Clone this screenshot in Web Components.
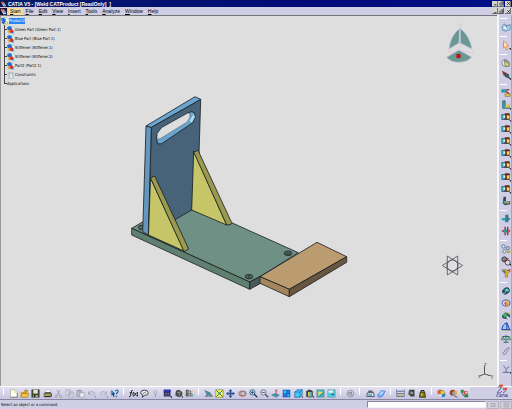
<!DOCTYPE html>
<html lang="en">
<head>
<meta charset="utf-8">
<title>CATIA V5</title>
<style>
    html, body { margin: 0; height: 100%; }
    body { font: 4px/6px "DejaVu Sans Condensed", "Liberation Sans", sans-serif; color: #000; background: #d0cee5; }
</style>
</head>
<body>
<cad-window></cad-window>

<script>
// all icons are drawn on a 12 x 12 grid
const ICONS = {
    app: '<path d="M0 0h12v12H0z" fill="#10153c"/><path d="M1 2l6 1 4 7-5 1z" fill="#e9edf5"/><path d="M1 1l7 1-3 5z" fill="#e2502c"/><path d="M5 5l6 1-4 4z" fill="#4c86c9"/>',
    product: '<path d="M4 1h5l3 3v8H4z" fill="#f4fbf5" stroke="#7fa9a0" stroke-width=".7"/><path d="M0 2l4-1 4 3-2 3-5-1z" fill="#2474dc"/><circle cx="4" cy="8" r="2.6" fill="#2c5ec5"/><circle cx="8" cy="9" r="2.7" fill="#d8b544"/><circle cx="8" cy="9" r="1" fill="#fff"/>',
    part: '<path d="M3 1h6l3 3v8H3z" fill="#edf8f3" stroke="#6d9e92" stroke-width=".7"/><path d="M0 2l4-2 4 3-2 4-5-1z" fill="#2268d6"/><circle cx="3.5" cy="8" r="2.5" fill="#d8b544"/><circle cx="7" cy="8" r="3" fill="#dc352f"/><path d="M6 8l2 3h3z" fill="#2757c4"/>',
    constraints: '<path d="M2 3h8v8H2z" fill="#eef2f3" stroke="#7b8a96" stroke-dasharray="1.5 1"/><path d="M4 1v9M8 1v9" stroke="#8aa0ae"/>',
    // file and edit
    blank: '<path d="M2 1h6l3 3v7H2z" fill="#fffff4" stroke="#90948b" stroke-width=".7"/><path d="M7 1l4 4H7z" fill="#e8e3a0"/><path d="M2 11h9V5" fill="none" stroke="#555" stroke-width=".7"/>',
    open: '<path d="M1 4h4l1-2h4v9H1z" fill="#d79b22"/><path d="M3 6h9l-2 5H1z" fill="#f6c43f" stroke="#806015" stroke-width=".6"/><path d="M6 2q3-2 5 1" stroke="#666" fill="none"/>',
    save: '<path d="M1 1h10v10H1z" fill="#454d22" stroke="#222" stroke-width=".6"/><path d="M3 1h6v5H3z" fill="#dce5e7"/><path d="M3 8h6v3H3z" fill="#a8b0a2"/><path d="M4 8h2v3H4z" fill="#222"/>',
    print: '<path d="M4 1h6L9 6H3z" fill="#fff" stroke="#888" stroke-width=".5"/><path d="M1 6l2-2h7l2 2v4l-2 1H1z" fill="#62635b"/><path d="M2 7h8v2H2z" fill="#c7b33a"/><path d="M2 10h8" stroke="#222"/>',
    cut: '<path d="M4 1l4 8M8 1L4 9" stroke="#9a9baf" stroke-width="1.2"/><circle cx="3" cy="10" r="1.5" fill="none" stroke="#9a9baf"/><circle cx="9" cy="10" r="1.5" fill="none" stroke="#9a9baf"/>',
    copy: '<path d="M1 1h6v7H1zM5 4h6v7H5z" fill="#dedeea" stroke="#9698aa" stroke-width=".8"/><path d="M6 6h4M6 8h4M2 3h3" stroke="#a6a7b5" stroke-width=".7"/>',
    paste: '<path d="M1 2h7v8H1z" fill="#b7b7c5" stroke="#9496a8" stroke-width=".8"/><path d="M5 5h6v6H5z" fill="#ececf2" stroke="#9496a8" stroke-width=".8"/><path d="M3 1h3v2H3z" fill="#8f91a4"/>',
    undo: '<path d="M2 3v4h4M2 6q3-4 7-2 3 3-1 5" fill="none" stroke="#a0a1b4" stroke-width="1.2"/><path d="M10 10h2v2z" fill="#777"/>',
    redo: '<path d="M10 3v4H6M10 6Q7 2 3 4q-3 3 1 5" fill="none" stroke="#a9aabc" stroke-width="1.2"/><path d="M10 10h2v2z" fill="#777"/>',
    whats: '<path d="M2 1l5 6-2 .3 1 3-1.5.5-1-3L2 9z" fill="#1b3a7a"/><path d="M7 3q1-2 3-1.5 2 1.500-.5 3.500-1 .8-1 2M8.500 9v2" fill="none" stroke="#18669f" stroke-width="1.500"/><path d="M1 3h3v3H1z" fill="#3f9dc1"/>',
    // knowledge
    formula: '<path d="M5 2Q3.500 1 3 4L2 9q-.5 2-2 1.500M1 5h3M6 4q-1.500 3 0 6M11 4q1.500 3 0 6M7 5l3 4M10 5L7 9" fill="none" stroke="#111" stroke-width="1.200"/>',
    comment: '<path d="M6 1.500q5 0 5 3.500T6 8.500L3 11l1-3Q1 7 1 5q0-3.500 5-3.500z" fill="#eee" stroke="#333" stroke-width="1.200"/><path d="M4 6l4-2" stroke="#555"/>',
    lock: '<circle cx="6" cy="4" r="2" fill="#ddd" stroke="#9b9cac"/><path d="M6 6v4" stroke="#9b9cac" stroke-width="1.500"/>',
    table: '<path d="M1 1h9v9H1z" fill="#23245b"/><path d="M1 1h9v3H1z" fill="#2b2fb0"/><path d="M1 6h9M1 8h9M4 4v6M7 4v6" stroke="#8d90ad" stroke-width=".5"/><path d="M9 10h3v2z"/>',
    rule: '<path d="M3 2l4-1 4 3v5l-4 2-5-2V5z" fill="#4b4b4b"/><path d="M4 4l3 1v4M8 3v2" stroke="#b5b5b5" fill="none"/><path d="M10 10h2v2z"/>',
    tree: '<path d="M1 1h4v9H1z" fill="#57645d"/><path d="M6 3h2M6 6h3M6 9h2M7 2v8" stroke="#555"/><path d="M8 2h3v3H8z" fill="#e6c39f"/><path d="M8 7h3v3H8z" fill="#5fa3a0"/><path d="M2 3h2v2H2z" fill="#dd7d5a"/>',
    // view
    fly: '<path d="M1 2l7 3 3 5-5-2-4 2 2-3z" fill="#4696a3" stroke="#3c5968" stroke-width=".7"/><path d="M1 10h10" stroke="#76858e"/>',
    fit: '<path d="M1 1h10v10H1z" fill="#f8f568" stroke="#59793e" stroke-width=".7"/><path d="M2 2l3 3M10 2L7 5M2 10l3-3M10 10L7 7" stroke="#165d38" stroke-width="1.200"/><path d="M4.500 4.500h3v3h-3z" fill="#2e9da0"/>',
    pan: '<path d="M6 0l2.500 3H7v2h2V3.500L12 6 9 8.500V7H7v2h1.500L6 12 3.500 9H5V7H3v1.500L0 6l3-2.500V5h2V3H3.500z" fill="#2e4f91"/>',
    rotate: '<ellipse cx="6" cy="6" rx="5" ry="3.500" fill="#e0a78c" stroke="#a8604f"/><path d="M3 4l5-1 2 5-4 1z" fill="#c3c6d8" stroke="#516681" stroke-width=".7"/><path d="M2 8l4 2" stroke="#c55b3b"/>',
    zoomin: '<circle cx="4.500" cy="4.500" r="3.500" fill="#b8edf2" stroke="#243a68"/><path d="M7 7l4 4" stroke="#243a68" stroke-width="1.800"/><path d="M4.500 2.500v4M2.500 4.500h4" stroke="#182654"/>',
    zoomout: '<circle cx="4.500" cy="4.500" r="3.500" fill="#e4ebee" stroke="#4c5874"/><path d="M7 7l4 4" stroke="#4c5874" stroke-width="1.800"/><path d="M2.500 4.500h4" stroke="#182654"/>',
    normal: '<path d="M1 8l4-2 6 2-4 3z" fill="#37a3b7" stroke="#35576b" stroke-width=".6"/><path d="M7 8V1M5.500 3L7 1l1.500 2" fill="none" stroke="#a54747"/>',
    multi: '<path d="M1 1h10v10H1z" fill="#1649bf"/><path d="M2 2h4v4H2zM7 7h3v3H7z" fill="#25c9f4"/><path d="M7 2h3v4H7zM2 7h4v3H2z" fill="#1e86e3"/>',
    iso: '<path d="M1 4l3-3h7v7l-3 3H1z" fill="#45cdf5" stroke="#1d4aa0" stroke-width=".8"/><path d="M1 4h7v7M8 4l3-3" fill="none" stroke="#1d4aa0" stroke-width=".8"/><path d="M10 10h2v2z"/>',
    shade: '<path d="M2 3l4-2 4 2v7l-4 1-4-1z" fill="#3c4140" stroke="#222" stroke-width=".6"/><path d="M4 4h4v6H4z" fill="#d6cf45"/><path d="M6 4h3v6H6z" fill="#58b5c4"/><path d="M10 10h2v2z"/>',
    hide: '<path d="M1 1h10v10H1z" fill="#38b8cb" stroke="#6b7b7b" stroke-width=".6"/><path d="M3 3l6 1-2 3-4 2z" fill="#e9dc62"/><path d="M5 9l5-4" stroke="#244b70"/>',
    swap: '<path d="M1 1h10v10H1z" fill="#51cfe4" stroke="#6b7b7b" stroke-width=".6"/><path d="M2 2h6v3H2z" fill="#e9f1e9"/><path d="M5 7q2-2 5 0-2 3-5 0z" fill="#20668c"/>',
    // workbench tools on the bottom bar
    update: '<circle cx="6" cy="6" r="4.500" fill="none" stroke="#85868f"/><path d="M3 5h5l-2 3h3M4 8q-1-4 4-4" fill="none" stroke="#85868f" stroke-width="1.200"/>',
    camera: '<path d="M2 5h8l1 5H1z" fill="#e8e8ee" stroke="#2c3442"/><path d="M3 2h5l2 3H3z" fill="#58636e"/><path d="M3 8h5" stroke="#2ba4c0" stroke-width="2"/>',
    eraser: '<path d="M1 8l5-6 5 1-4 7-5 1z" fill="#a9d3fa" stroke="#3e77d7"/><path d="M1 8l5 1 5-6" fill="none" stroke="#5689dd"/>',
    measure: '<path d="M1 1v4M11 1v4M2 3h8" stroke="#38446e"/><path d="M1 6h10v4H1z" fill="#eed6a0" stroke="#465e97"/><path d="M3 7v2M5 7v2M7 7v2M9 7v2" stroke="#734b50" stroke-width=".6"/>',
    measureitem: '<path d="M3 1h7v9H5L2 7z" fill="#3c4145"/><path d="M4 3l4 1v3H5z" fill="#8f9d97"/><path d="M1 4h3M1 7h3" stroke="#777"/>',
    inertia: '<path d="M3 4h6l1 7H2z" fill="#84761b" stroke="#26250f"/><path d="M4 4V2h4v2" fill="none" stroke="#26250f" stroke-width="1.300"/><path d="M4 6h2v3H4z" fill="#d4c74d"/>',
    scene: '<circle cx="4" cy="4" r="3.500" fill="#d6663b"/><path d="M4 3l5-1 2 5-5 3z" fill="#f0c43f" stroke="#745d2b" stroke-width=".5"/><path d="M6 7l5-1v4l-4 1z" fill="#2d88b8"/><path d="M2 7h4v3z" fill="#ecf3f4"/>',
    render: '<circle cx="5" cy="5" r="4" fill="#a03c38"/><path d="M4 4l6-2 1 5-5 3z" fill="#e1ac35"/><circle cx="6" cy="6" r="2" fill="#7b9dd7"/><path d="M7 9l4 2" stroke="#333"/>',
    link: '<path d="M1 1h4v4H1z" fill="#2b9340"/><path d="M5 3h5v4H5z" fill="#d83a38"/><path d="M6 7h5v4H6z" fill="#2a8a3c"/><path d="M2 5l4 5" stroke="#222"/><path d="M7 4h2v2H7z" fill="#fff"/>',
    // product structure, right bar
    gears: '<path d="M1 6l3-4 3 3 4-2v6l-5 2-4-1z" fill="#a6d8ef" stroke="#4c719b" stroke-width=".8"/><path d="M4 3l4 5M8 3L4 9" stroke="#657da5"/><circle cx="5" cy="7" r="1.500" fill="#f4f8fa"/>',
    select: '<path d="M3 1l6 6-2.500.3L8 11l-2 .6L4.600 8 3 9.500z" fill="#ffe5cc" stroke="#f08b35" stroke-width="1.200"/><path d="M9.500 10H12v2z"/>',
    manip: '<circle cx="5" cy="6" r="4" fill="#e5e7e2" stroke="#80828a"/><path d="M4 2l6 3v5H5z" fill="#a4a887" stroke="#4b5362" stroke-width=".6"/><path d="M5 6l4 1v2H5z" fill="#ddd34c"/>',
    snap: '<path d="M1 1l5 2 2 3-5 1z" fill="#b44045"/><path d="M4 4l5 1 1 5-5-2z" fill="#2d6668" stroke="#2f3944" stroke-width=".6"/><path d="M2 2l4 4" stroke="#413c4e"/><path d="M9 10h3v2z"/>',
    coincide: '<path d="M1 2h6v3H1z" fill="#23b5bd" stroke="#244f61" stroke-width=".6"/><path d="M5 7h6v3H5z" fill="#e9ce3a" stroke="#51502c" stroke-width=".6"/><path d="M6 4l4 3M7 2h3" stroke="#b5352f" stroke-width="1.500"/>',
    contact: '<path d="M2 1h3v6l5-1v4H2z" fill="#369fa7" stroke="#234852" stroke-width=".7"/><path d="M5 7l3-2 3 1-1 3H5z" fill="#e6c53f"/><path d="M10 10h2v2z"/>',
    assembly: '<path d="M1 3h4v6H1z" fill="#2fbccb" stroke="#213545" stroke-width=".7"/><path d="M5 2h5v7H5z" fill="#7d2528" stroke="#231c1d" stroke-width=".7"/><path d="M7 4h3v4H7z" fill="#f2e145"/><path d="M3 4h2v3H3z" fill="#e5fff9"/><path d="M10 10h2v2z"/>',
    corner: '<path d="M3 1h3v6l5-1v4l-6 1-3-2z" fill="#334b57"/><path d="M3 6h3v3H3z" fill="#35afbb"/><path d="M6 7l4-1v3H6z" fill="#bf9859"/>',
    align: '<path d="M1 6h5M6 1v9M8 1v9M8 6h3" stroke="#277681" stroke-width="1.800"/><path d="M2 5h3v3H2z" fill="#24b4b7"/>',
    explode: '<path d="M1 6h10M5 1v10M8 1v10" stroke="#9c3339" stroke-width="1.700"/><path d="M3 4h4v4H3z" fill="#2a969c"/><path d="M8 4h2v4H8z" fill="#d15351"/>',
    pattern: '<circle cx="3" cy="3" r="2" fill="#dee9f5" stroke="#4d6a94"/><circle cx="8" cy="5" r="2" fill="#b6d1de" stroke="#52617e"/><circle cx="4" cy="9" r="2" fill="#dee9f5" stroke="#4d6a94"/><path d="M7 8h4v3H7z" fill="#b5a92f"/>',
    clash: '<circle cx="4" cy="4" r="3" fill="#7d8796" stroke="#28303b"/><circle cx="8" cy="8" r="3" fill="#dedbe2" stroke="#33343e"/><path d="M3 7l6-4" stroke="#9a3038" stroke-width="1.500"/><path d="M10 10h2v2z"/>',
    section: '<path d="M1 2h5l5 2-3 3v4H5V7z" fill="#e2ad2d" stroke="#7c662a" stroke-width=".6"/><path d="M1 4l4-1 1 4z" fill="#2a75b9"/><path d="M7 3l4-2v3z" fill="#b73c34"/>',
    sphere: '<ellipse cx="6" cy="6" rx="4.800" ry="3.800" fill="#22474e" transform="rotate(-35 6 6)"/><ellipse cx="7" cy="5" rx="2.500" ry="2" fill="#56c4c8"/><path d="M2 9l4-1" stroke="#99dfd9"/>',
    turn: '<ellipse cx="6" cy="6" rx="4.800" ry="3.800" fill="#dce6f3" stroke="#3c62b4" stroke-width="1.200"/><path d="M5 3h4v7H5z" fill="#e18b3c"/><path d="M3 5l3 1v4z" fill="#da4d53"/><path d="M6 4h2v3z" fill="#f7e269"/>',
    machine: '<path d="M1 7l4-4 5 1 1 4-3 3-6-1z" fill="#25515b"/><path d="M2 6l4-3 2 4-4 2z" fill="#3eb66b"/><path d="M7 3h3v3z" fill="#dcc23b"/><circle cx="8" cy="9" r="1.500" fill="#eef"/>',
    dome: '<path d="M1 9q1-7 6-8l4 9z" fill="#99cef4" stroke="#1c3cba" stroke-width="1.200"/><path d="M1 9h10M7 1v8" stroke="#1c3cba" stroke-width="1.200"/><path d="M2 10h9" stroke="#d4bd3f"/>',
    scale: '<path d="M6 1v9M2 3h8M3 10h6" stroke="#326b61" stroke-width="1.200"/><path d="M0 7l2-4 3 4zM7 7l3-4 2 4z" fill="#8aad88" stroke="#326b61" stroke-width=".6"/>',
    clip: '<path d="M3 8l5-6q2-1 2 1L5 10q-2 1-3-1l5-6" fill="none" stroke="#8b8b98" stroke-width="1.200"/>',
    robot: '<path d="M3 2l3 4 4-3M6 6v4M2 10h8" fill="none" stroke="#5b6c99" stroke-width="1.200"/><path d="M5 5h3v2H5z" fill="#98a7c5"/><path d="M10 10h2v2z"/>',
    // window controls
    min: '<path d="M3 9h5" stroke="#111" stroke-width="2"/>',
    max: '<path d="M2 5h6v5H2zM5 2h5v5H8" fill="none" stroke="#222" stroke-width="1.500"/>',
    close: '<path d="M3 3l6 6M9 3L3 9" stroke="#111" stroke-width="1.800"/>',
    key: '<path d="M1 3h6v6H1zM9 2v8" fill="none" stroke="#a2a2b3" stroke-width="1.500"/>',
    mail: '<path d="M1 2h10v8H1zM1 2l5 4 5-4M4 10V6h4v4" fill="none" stroke="#a2a2b3" stroke-width="1.200"/>'
}

class BaseElement extends HTMLElement {
    constructor() {
        super()
        this.attachShadow({ mode: 'open' })
    }
    connectedCallback() {
        this.shadowRoot.innerHTML = `<style>:host { display: block; box-sizing: border-box; } ${this.css()}</style>${this.html()}`
    }
    css() { return '' }
    html() { return '<slot></slot>' }
}

class CadIcon extends BaseElement {
    css() {
        return `:host { width: 9px; height: 9px; flex: none; } svg { display: block; width: 100%; height: 100%; }`
    }
    html() {
        return `<svg viewBox="0 0 12 12" aria-hidden="true">${ICONS[this.getAttribute('name')]}</svg>`
    }
}

class WindowButtons extends BaseElement {
    css() {
        return `
        :host { display: flex; margin-left: auto; padding-right: 1px; }
        button { width: 6px; height: 6px; padding: 0; border: 0; background: #d6d3d0; box-shadow: inset -1px -1px #77757c; display: grid; place-items: center; }
        button:last-child { margin-left: 1px; }
        cad-icon { width: 5px; height: 5px; }`
    }
    html() {
        return ['min', 'max', 'close'].map(n => `<button aria-label="${n}"><cad-icon name="${n}"></cad-icon></button>`).join('')
    }
}

class TitleBar extends BaseElement {
    css() {
        return `
        :host { display: flex; align-items: center; gap: 1px; height: 7px; background: linear-gradient(90deg, #071a68, #000b78 60%, #000e86); color: #fff; font: bold 5px/6px "Liberation Sans", sans-serif; white-space: pre; }
        .logo { width: 7px; height: 6px; }`
    }
    html() {
        return `<cad-icon class="logo" name="app"></cad-icon><span><slot></slot></span><window-buttons></window-buttons>`
    }
}

class MenuBar extends BaseElement {
    css() {
        return `
        :host { display: flex; align-items: center; height: 8px; background: #d0cee5; }
        nav { display: flex; }
        .logo { width: 7px; height: 7px; margin-right: 1px; }
        button { font: 5px/7px "Liberation Sans", sans-serif; color: inherit; border: 0; background: none; padding: 0 2px; height: 7px; margin-right: 1px; }
        button:first-child { background: #fbdc9c; }
        button::first-letter { text-decoration: underline; }`
    }
    html() {
        const items = this.getAttribute('items').split(',')
        return `<cad-icon class="logo" name="app"></cad-icon><nav>${items.map(i => `<button>${i}</button>`).join('')}</nav><window-buttons></window-buttons>`
    }
}

class TreeNode extends BaseElement {
    css() {
        return `
        :host { display: flex; align-items: center; height: 9px; padding-left: 3px; background: linear-gradient(#444, #444) 3px 0 / 1px 100% no-repeat; white-space: nowrap; }
        :host([root]) { background: none; padding-left: 0; }
        :host([last]) { background-size: 1px 50%; }
        i { width: 3px; height: 1px; background: #444; }
        :host([root]) i { display: none; }
        :host([root]) span { background: #2786f4; color: #fff; }
        cad-icon { width: 8px; height: 8px; }`
    }
    html() {
        const icon = this.getAttribute('icon')
        return `<i></i>${icon ? `<cad-icon name="${icon}"></cad-icon>` : ''}<span><slot></slot></span>`
    }
}

class ModelView extends BaseElement {
    css() {
        return `
        :host { position: relative; min-width: 0; min-height: 0; overflow: hidden; background: #dedede; border-top: 1px solid #777; border-left: 1px solid #999; }
        svg { position: absolute; inset: 0; width: 100%; height: 100%; }
        .tree { position: relative; }
        .edges { stroke: #161c20; stroke-width: .8; stroke-linejoin: round; }
        text { font: 5px "Liberation Sans", sans-serif; }`
    }
    html() {
        return `
        <svg viewBox="1 16 496 370" role="img" aria-label="Weld assembly">
            <g class="edges">
                <!-- base plate -->
                <path d="M131.700 228.300L142.500 222 191.700 210 231.700 222.700 298.300 252.700 260 276.700 249.700 282z" fill="#6f9085"/>
                <path d="M131.700 228.300L249.700 282v7.300L131.700 235z" fill="#5f8071"/>
                <path d="M249.700 282l11-6v7.300l-11 6z" fill="#485b58"/>
                <g fill="#51665f">
                    <ellipse cx="288" cy="253.300" rx="3.800" ry="2.200"/>
                    <ellipse cx="249" cy="276.700" rx="3.800" ry="2.200"/>
                    <ellipse cx="141.500" cy="227.500" rx="3" ry="2.200"/>
                </g>
                <path d="M286 254h4M249 275v3" stroke-width=".6"/>
                <!-- upright plate -->
                <path d="M151.300 127.300l49.400-28L199 155l-7.300 55-43.400 25z" fill="#466379"/>
                <path d="M146 126l5.300 1.300-3 107.700-5.600-3.300z" fill="#6597be"/>
                <path d="M146 126l49-29.300 5.700 2.600-49.400 28z" fill="#6ba6d0"/>
                <path d="M156.700 140l.6-6.700 4.400-5.600 26.600-15q4-2 6 0l1 4-2.600 6-4.400 3-26.600 18-4 .3z" fill="#69a4ce"/>
                <path d="M156.900 139l.6-5.700 4.200-5.600 26.300-14.700 2 1-.3 3.700-3 4.500-26.700 16.500z" fill="#dedede" stroke-width=".3"/>
                <path d="M189.500 121l4-7 1.500 3-3 5.500z" fill="#a8deee" stroke="none"/>
                <!-- stiffeners -->
                <path d="M193.700 151l33 74-35-15z" fill="#c6c668"/>
                <path d="M193.700 152l4.300-1.700 33.700 72.400-1 1.800-4 .5z" fill="#999950"/>
                <path d="M150.500 178l33.500 73-35.500-16z" fill="#c6c668"/>
                <path d="M150.500 178l4.200-2 34 73-4.700 2.500z" fill="#999950"/>
                <!-- step -->
                <path d="M260 276.700l57-34.400 29.700 14.400-57.400 32.600z" fill="#ba9c70"/>
                <path d="M260 276.700l29.300 12.600v7.400L260 283.300z" fill="#a5855e"/>
                <path d="M289.300 289.300l57.400-32.600v5.600l-57.400 34.400z" fill="#695640"/>
            </g>
            <!-- compass -->
            <g fill="#6c9894" stroke="#c4c3db" stroke-width=".8">
                <path d="M460 28q-10 8-11 21l10-6z"/>
                <path d="M460 28q10 8 12 21l-12-6z"/>
                <path d="M446.700 57.300L459 50l12.500 7q-3 5-12.500 5.300-9 0-12.300-5z"/>
            </g>
            <path d="M460 24v27M451 53l8-4M459 50l13 3" stroke="#d2cfe2" fill="none"/>
            <path d="M456.500 54h4v4h-4z" fill="#c90d0d"/>
            <g fill="#dfcba4"><text x="460" y="26">z</text><text x="448" y="53">x</text><text x="472" y="53">y</text></g>
            <!-- orientation star -->
            <g fill="none" stroke="#4d4d58" stroke-width=".8">
                <path d="M442.300 265.500L457.700 256v19zM462.700 265.500L447.300 256v19z"/>
                <circle cx="452.500" cy="265.500" r="5.500"/>
            </g>
            <!-- axis -->
            <path d="M484.500 374v-8M484.500 374l-5 2M484.500 374l7 2" stroke="#555" stroke-width="1"/>
            <g fill="#555"><text x="484" y="366">z</text><text x="478" y="378">x</text><text x="491" y="378">y</text></g>
        </svg>
        <div class="tree"><slot></slot></div>`
    }
}

// icons="a,b|c,d" : a bar before each group
class ToolBar extends BaseElement {
    css() {
        return `
        :host { display: flex; min-width: 0; background: #d0cee5; }
        button { flex: 1 1 11px; min-width: 0; padding: 0; border: 0; background: none; display: grid; place-items: center; }
        hr { flex: 0 0 8px; margin: 0; border: 0; background: linear-gradient(90deg, #fff, #fff) 3px 1px / 1px 7px no-repeat; }
        hr:first-child { flex-basis: 6px; }
        :host([vertical]) { flex-direction: column; padding-left: 1px; border-left: 2px solid #f6f6fb; border-right: 1px solid #a5a3c4; }
        :host([vertical]) button { flex: 0 0 12px; }
        :host([vertical]) hr { flex: 0 0 6px; background: linear-gradient(#fff, #fff) 0 3px / 7px 1px no-repeat; }
        :host([vertical]) cad-icon { width: 10px; height: 10px; }`
    }
    html() {
        return this.getAttribute('icons').split('|').map(group =>
            '<hr>' + group.split(',').map(n => `<button aria-label="${n}"><cad-icon name="${n}"></cad-icon></button>`).join('')
        ).join('')
    }
}

class BrandMark extends BaseElement {
    css() {
        return `svg { display: block; width: 17px; height: 15px; } text { font: italic bold 4px "Liberation Sans", sans-serif; }`
    }
    html() {
        return `<svg viewBox="0 0 17 15">
            <path d="M4 3q4-1 3 1L3 9q4 1 5-2M10 5q4-2 2 1t-3 3" fill="none" stroke="#5363a6" stroke-width="1"/>
            <path d="M5 1h4L7 4M9 4l4 1-4 1" fill="#e5502f" stroke="#e5502f" stroke-width=".8"/>
            <text x="2" y="13" fill="#3c4c91">CATIA</text></svg>`
    }
}

class StatusBar extends BaseElement {
    css() {
        return `
        :host { display: flex; align-items: center; height: 9px; background: #d0cee5; }
        label { flex: 1; padding-left: 1px; white-space: nowrap; }
        input { box-sizing: border-box; width: 119px; height: 7px; padding: 0 1px; border: 1px solid #f3f3f6; border-top-color: #85849a; border-left-color: #85849a; background: #fff; font: inherit; }
        button { width: 12px; height: 8px; margin-left: 1px; padding: 0; border: 1px solid #b5b3c3; background: #d2d0d8; display: grid; place-items: center; }
        cad-icon { width: 7px; height: 6px; }`
    }
    html() {
        return `<label for="cmd"><slot></slot></label><input id="cmd" type="text">
        <button aria-label="key"><cad-icon name="key"></cad-icon></button><button aria-label="mail"><cad-icon name="mail"></cad-icon></button>`
    }
}

class CadWindow extends BaseElement {
    css() {
        return `
        :host { display: grid; grid-template-rows: auto auto 1fr auto auto; height: 100vh; }
        .work { display: grid; grid-template-columns: 1fr 15px; min-height: 0; }
        .bottom { display: flex; height: 14px; background: #d0cee5; border-top: 1px solid #fff; border-bottom: 1px solid #8886a2; box-sizing: border-box; }
        .bottom tool-bar { flex: 1; background: linear-gradient(#e3e2f0, #c7c5df); }
        brand-mark { margin: -3px 1px 0 24px; }`
    }
    html() {
        const asm = Array(7).fill('assembly').join(',')
        return `
        <title-bar>CATIA V5 - [Weld CATProduct [ReadOnly]  ]</title-bar>
        <menu-bar items="Start,File,Edit,View,Insert,Tools,Analyze,Window,Help"></menu-bar>
        <div class="work">
            <model-view>
                <tree-node root icon="product">Product2</tree-node>
                <tree-node icon="part">Green Part (Green Part.1)</tree-node>
                <tree-node icon="part">Blue Part (Blue Part.1)</tree-node>
                <tree-node icon="part">Stiffener (Stiffener.1)</tree-node>
                <tree-node icon="part">Stiffener (Stiffener.2)</tree-node>
                <tree-node icon="part">Part2 (Part2.1)</tree-node>
                <tree-node icon="constraints">Constraints</tree-node>
                <tree-node last>Applications</tree-node>
            </model-view>
            <tool-bar vertical icons="gears|select|manip,snap|coincide,contact,${asm},corner|align,explode|pattern,clash,section|sphere,turn,machine,dome,scale,clip|robot"></tool-bar>
        </div>
        <div class="bottom">
            <tool-bar icons="blank,open,save,print,cut,copy,paste,undo,redo,whats|formula,comment,lock,table,rule,tree|fly,fit,pan,rotate,zoomin,zoomout,normal,multi,iso,shade,hide,swap|update|camera,eraser|measure,measureitem,inertia|scene,render,link"></tool-bar>
            <brand-mark></brand-mark>
        </div>
        <status-bar>Select an object or a command</status-bar>`
    }
}

customElements.define('cad-icon', CadIcon)
customElements.define('window-buttons', WindowButtons)
customElements.define('title-bar', TitleBar)
customElements.define('menu-bar', MenuBar)
customElements.define('tree-node', TreeNode)
customElements.define('model-view', ModelView)
customElements.define('tool-bar', ToolBar)
customElements.define('brand-mark', BrandMark)
customElements.define('status-bar', StatusBar)
customElements.define('cad-window', CadWindow)
</script>
</body>
</html>
